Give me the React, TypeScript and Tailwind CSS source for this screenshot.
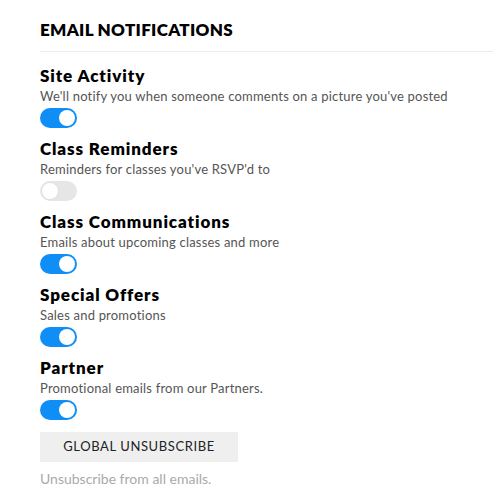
import { useState } from "react";

const items = [
  { title: "Site Activity", desc: "We'll notify you when someone comments on a picture you've posted", on: true },
  { title: "Class Reminders", desc: "Reminders for classes you've RSVP'd to", on: false },
  { title: "Class Communications", desc: "Emails about upcoming classes and more", on: true },
  { title: "Special Offers", desc: "Sales and promotions", on: true },
  { title: "Partner", desc: "Promotional emails from our Partners.", on: true },
];

function Toggle({ on, onClick }: { on: boolean; onClick: () => void }) {
  return (
    <button
      onClick={onClick}
      className={`relative block w-[37px] h-[20px] rounded-full ${on ? "bg-[#0f8ff6]" : "bg-[#e6e6e6]"}`}
    >
      <span
        className={`absolute top-[2px] w-[16px] h-[16px] rounded-full bg-white ${on ? "left-[19px]" : "left-[2px] shadow-[0_0_0_1px_#e0e0e0]"}`}
      />
    </button>
  );
}

export default function App() {
  const [state, setState] = useState(items.map((i) => i.on));

  return (
    <div className="bg-white min-h-screen pl-[40px] pt-[18px] font-['Lato',sans-serif] text-black">
      <h2 className="text-[17px] leading-[24px] font-extrabold tracking-[0.3px]">EMAIL NOTIFICATIONS</h2>
      <div className="mt-[9px] border-t border-[#ececec]" />

      <div className="mt-[13px]">
        {items.map((item, i) => (
          <div key={item.title} className="mb-[10px]">
            <h3 className="text-[17px] leading-[22px] font-extrabold tracking-[0.9px]">{item.title}</h3>
            <p className="text-[13px] leading-[18px] tracking-[0.2px] text-[#555]">{item.desc}</p>
            <div className="mt-[3px]">
              <Toggle on={state[i]} onClick={() => setState(state.map((s, j) => (j === i ? !s : s)))} />
            </div>
          </div>
        ))}
      </div>

      <button className="mt-[2px] w-[198px] h-[30px] bg-[#efefef] text-[13px] tracking-[0.6px] text-[#222]">
        GLOBAL UNSUBSCRIBE
      </button>
      <p className="mt-[8px] text-[14px] leading-[18px] text-[#aaa]">Unsubscribe from all emails.</p>
    </div>
  );
}
